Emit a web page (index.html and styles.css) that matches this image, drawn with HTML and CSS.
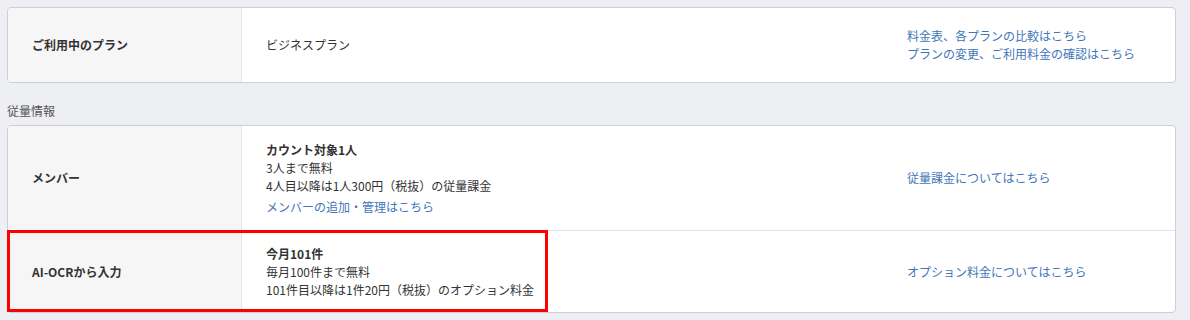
FILE: index.html
```html
<!DOCTYPE html>
<html>
<head>
    <title>ご利用状況</title>
    <link rel="stylesheet" href="styles.css">
</head>
<body>
    <div class="page">
        <div class="card">
            <div class="row row-plan">
                <div class="label">ご利用中のプラン</div>
                <div class="value">ビジネスプラン</div>
                <div class="links">
                    <a href="#">料金表、各プランの比較はこちら</a>
                    <a href="#">プランの変更、ご利用料金の確認はこちら</a>
                </div>
            </div>
        </div>

        <div class="section-title">従量情報</div>

        <div class="card">
            <div class="row row-member">
                <div class="label">メンバー</div>
                <div class="value">
                    <div class="strong">カウント対象1人</div>
                    <div>3人まで無料</div>
                    <div>4人目以降は1人300円（税抜）の従量課金</div>
                    <a href="#" class="sub-link">メンバーの追加・管理はこちら</a>
                </div>
                <div class="links">
                    <a href="#">従量課金についてはこちら</a>
                </div>
            </div>
            <div class="row row-ocr">
                <div class="label">AI-OCRから入力</div>
                <div class="value">
                    <div class="strong">今月101件</div>
                    <div>毎月100件まで無料</div>
                    <div>101件目以降は1件20円（税抜）のオプション料金</div>
                </div>
                <div class="links">
                    <a href="#">オプション料金についてはこちら</a>
                </div>
                <div class="highlight"></div>
            </div>
        </div>
    </div>
</body>
</html>
```

FILE: styles.css
```css
* {
    box-sizing: border-box;
}

body {
    margin: 0;
    padding: 0;
    background-color: #eeeff2;
    font-family: "Noto Sans CJK JP", "Noto Sans", sans-serif;
    font-size: 12px;
    line-height: 18px;
    color: #333333;
}

.page {
    width: 1169px;
    margin: 7px 0 0 7px;
}

.card {
    background-color: #ffffff;
    border: 1px solid #cfcfd2;
    border-radius: 4px;
}

.row {
    position: relative;
    display: flex;
    align-items: stretch;
}

.row + .row {
    border-top: 1px solid #e3e3e6;
}

.row-plan {
    min-height: 74px;
}

.row-member {
    min-height: 104px;
}

.row-ocr {
    min-height: 82px;
}

.label {
    width: 234px;
    flex-shrink: 0;
    display: flex;
    align-items: center;
    padding-left: 24px;
    background-color: #f6f6f7;
    border-right: 1px solid #e6e6e8;
    font-weight: bold;
}

.card .row:first-child .label {
    border-top-left-radius: 3px;
}

.card .row:last-child .label {
    border-bottom-left-radius: 3px;
}

.value {
    flex: 1;
    display: flex;
    flex-direction: column;
    justify-content: center;
    padding: 12px 24px;
}

.strong {
    font-weight: bold;
}

.links {
    width: 292px;
    flex-shrink: 0;
    display: flex;
    flex-direction: column;
    justify-content: center;
    padding: 12px 24px;
}

a {
    color: #3f76b8;
    text-decoration: none;
}

.sub-link {
    margin-top: 3px;
}

.section-title {
    margin: 19px 0 5px;
    color: #555555;
}

/* annotation frame over the AI-OCR row */
.highlight {
    position: absolute;
    left: -1px;
    top: -1px;
    width: 541px;
    height: 82px;
    border: 3px solid #ff0000;
    pointer-events: none;
}
```
